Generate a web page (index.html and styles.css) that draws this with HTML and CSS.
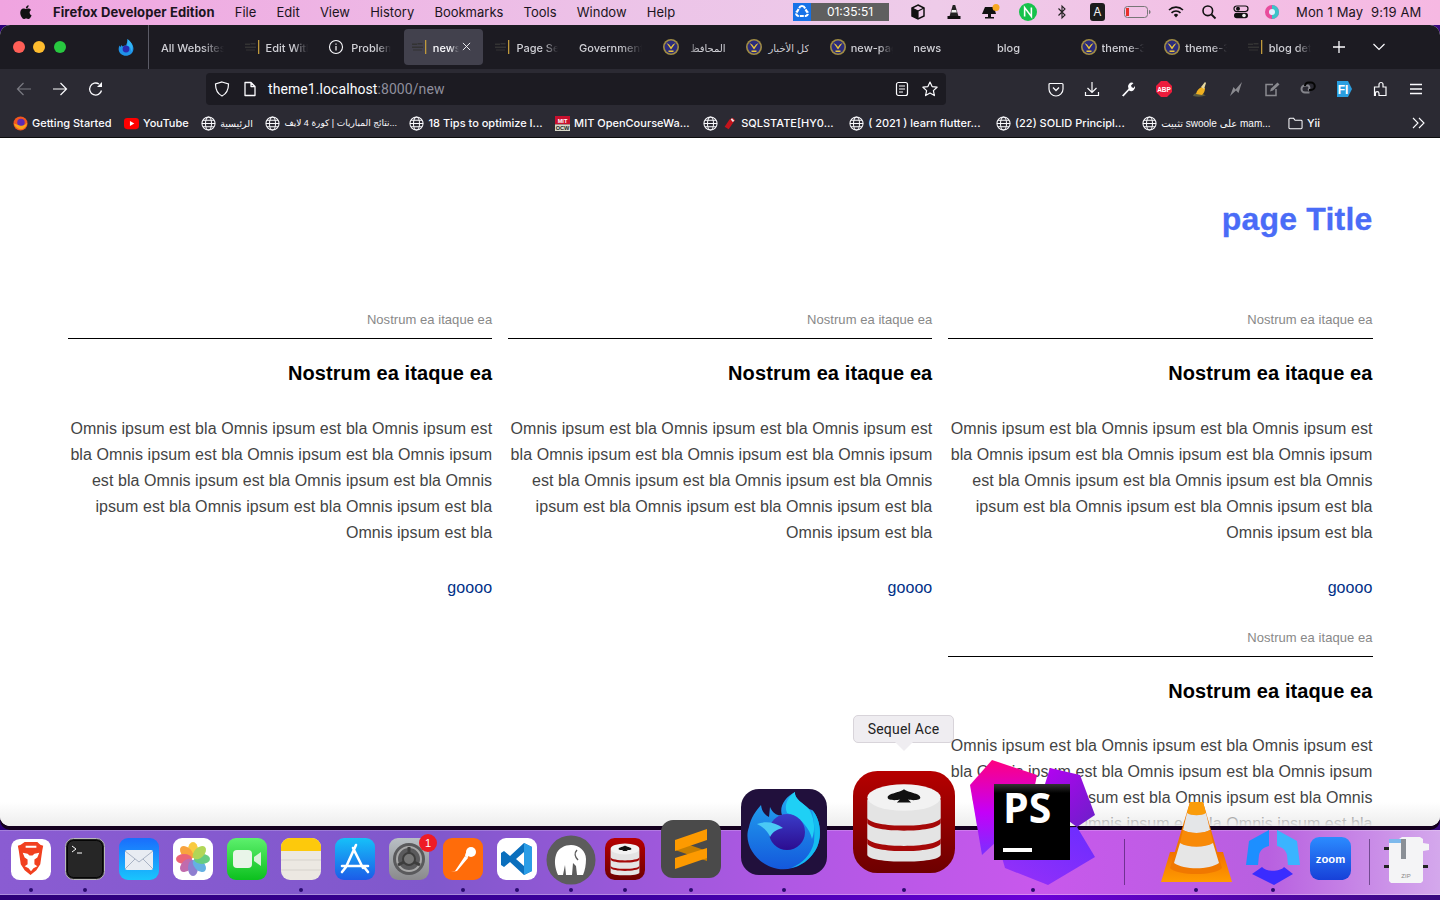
FILE: index.html
```html
<!DOCTYPE html>
<html lang="en">
<head>
    <meta charset="UTF-8">
    <meta name="viewport" content="width=device-width, initial-scale=1.0">
    <title>news</title>
    <link rel="stylesheet" href="styles.css">
</head>
<body>
    <svg class="defs" width="0" height="0">
        <symbol id="globe" viewBox="0 0 16 16"><g fill="none" stroke="#fbfbfe" stroke-width="1.100"><circle cx="8" cy="8" r="7"/><ellipse cx="8" cy="8" rx="3.200" ry="7"/><path d="M1 8h14M2 4.600h12M2 11.400h12"/></g></symbol>
        <symbol id="police" viewBox="0 0 16 16"><circle cx="8" cy="8" r="8" fill="#a08c44"/><circle cx="8" cy="8" r="6.400" fill="#2b2c7c"/><path d="M3.500 4 8 10.500 12.500 4l-2.600 1.500L8 8 6.100 5.500z" fill="#e8c53a"/><path d="M5.500 11.500h5v1.500h-5z" fill="#e8c53a"/></symbol>
        <symbol id="darkfav" viewBox="0 0 16 16"><path d="M0 4.500h5V6H0zM5.500 4h5v1.500h-5zM0 7.500h11V9H0zM1 10.500h9v1H1z" fill="#333"/><path d="M13 1h1.300v14H13z" fill="#c09a3c"/></symbol>
        <symbol id="sequel" viewBox="0 0 100 100" preserveAspectRatio="none"><rect width="100" height="100" rx="24" fill="url(#sq)"/><path d="M14 28v54c0 9 72 9 72 0V28z" fill="#e4e4e4"/><ellipse cx="50" cy="26" rx="36" ry="13" fill="#f2f2f2"/><path d="M14 46c4 10 68 10 72 0v5c-4 10-68 10-72 0zM14 66c4 10 68 10 72 0v5c-4 10-68 10-72 0z" fill="#a50808"/><path d="M50 18c3 3 16 4 16 8 0 3-8 3-12 2l3 3H43l3-3c-4 1-12 1-12-2 0-4 13-5 16-8z" fill="#111"/></symbol>
        <defs>
            <linearGradient id="sq" x1="0" y1="0" x2="0" y2="1"><stop offset="0" stop-color="#b60000"/><stop offset="1" stop-color="#6d0000"/></linearGradient>
            <linearGradient id="ffbowl" x1="0" y1="0" x2="0" y2="1"><stop offset="0" stop-color="#22a8f0"/><stop offset="1" stop-color="#1458dc"/></linearGradient>
            <linearGradient id="ffglobe" x1="0" y1="0" x2="0" y2="1"><stop offset="0" stop-color="#3a3cc8"/><stop offset="1" stop-color="#2c0c90"/></linearGradient>
            <linearGradient id="pspink" x1="0.300" y1="0" x2="0.300" y2="1"><stop offset="0" stop-color="#ff0080"/><stop offset=".55" stop-color="#c400f8"/><stop offset="1" stop-color="#7a30ff"/></linearGradient>
            <linearGradient id="pstop" x1="0" y1="0" x2="1" y2="1"><stop offset="0" stop-color="#b800f4"/><stop offset="1" stop-color="#6a20c8"/></linearGradient>
            <linearGradient id="psbot" x1="0" y1="1" x2="1" y2="0"><stop offset="0" stop-color="#9a30f8"/><stop offset="1" stop-color="#6a2cff"/></linearGradient>
            <linearGradient id="psbox" x1="0" y1="0" x2="0" y2="1"><stop offset="0" stop-color="#333"/><stop offset=".12" stop-color="#000"/></linearGradient>
            <linearGradient id="vlcbase" x1="0" y1="0" x2="0" y2="1"><stop offset="0" stop-color="#f27000"/><stop offset="1" stop-color="#ff9c00"/></linearGradient>
        </defs>
    </svg>

    <header class="menubar">
        <svg class="apple" viewBox="0 0 14 16"><path d="M10.600 8.500c0-1.700 1.400-2.500 1.500-2.600-.8-1.200-2.100-1.300-2.500-1.400-1.100-.1-2.100.6-2.600.6s-1.400-.6-2.300-.6C3.500 4.500 2.400 5.200 1.800 6.200.6 8.400 1.500 11.600 2.700 13.300c.6.800 1.300 1.800 2.200 1.700.9 0 1.200-.6 2.300-.6s1.400.6 2.300.6 1.600-.8 2.100-1.700c.7-1 1-1.900 1-2-.1 0-2-.8-2-2.800zM8.900 3.400c.5-.6.800-1.400.7-2.200-.7 0-1.500.5-2 1.100-.4.500-.8 1.300-.7 2.100.8 0 1.500-.4 2-1z"/></svg>
        <nav class="menu">
            <strong class="menu-app">Firefox Developer Edition</strong>
            <span>File</span><span>Edit</span><span>View</span><span>History</span><span>Bookmarks</span><span>Tools</span><span>Window</span><span>Help</span>
        </nav>
        <div class="status">
            <div class="timer">
                <span class="timer-icon"><svg viewBox="0 0 18 18" width="18" height="18"><path d="M9 3a3 3 0 0 1 2.800 2l2 3.500a2.500 2.500 0 0 1-1 4.500H5.200a2.500 2.500 0 0 1-1-4.500L6.200 5A3 3 0 0 1 9 3z" fill="none" stroke="#fff" stroke-width="2.200" stroke-dasharray="4 1"/></svg></span>
                <span class="timer-time">01:35:51</span>
            </div>
            <svg class="st gap20" viewBox="0 0 16 16"><path d="M8 1l6 3v8l-6 3-6-3V4z" fill="none" stroke="#111" stroke-width="1.500"/><path d="M2 4l6 3 6-3M8 7v8" fill="none" stroke="#111" stroke-width="1.200"/><path d="M2 4l6 3v8l-6-3z" fill="#111"/></svg>
            <svg class="st gap19" viewBox="0 0 16 16"><path d="M6.800 1h2.400l3.200 11H3.600z" fill="#222"/><path d="M5.800 6h4.400l.6 2.500H5.200z" fill="#eee"/><path d="M1.500 12h13v3h-13z" fill="#111"/></svg>
            <svg class="st st-bell gap18" viewBox="0 0 20 16"><path d="M1 10 4 3h9l2 7z" fill="#111"/><path d="M7 10h3v3h3v1.500H4V13h3z" fill="#111"/><circle cx="15" cy="3.500" r="3.500" fill="#f7a823"/></svg>
            <svg class="st st-n gap17" viewBox="0 0 16 16"><circle cx="8" cy="8" r="8" fill="#16c24b"/><path d="M5 12V4l6 8V4" fill="none" stroke="#fff" stroke-width="1.400"/></svg>
            <svg class="st gap20" viewBox="0 0 16 16"><path d="M4.500 4.500 11 11l-3 3V2l3 3-6.500 6.500" fill="none" stroke="#222" stroke-width="1.100"/></svg>
            <span class="st-a gap19">A</span>
            <svg class="st-batt gap17" viewBox="0 0 27 12"><rect x=".5" y=".5" width="23" height="11" rx="3" fill="none" stroke="#777"/><rect x="2" y="2" width="3" height="8" fill="#e8302a"/><path d="M25 4c1 .3 1.500 1 1.500 2s-.5 1.700-1.500 2z" fill="#777"/></svg>
            <svg class="st gap17" viewBox="0 0 16 16"><g fill="none" stroke="#111" stroke-width="1.600"><path d="M1 6a10 10 0 0 1 14 0"/><path d="M3.500 8.800a6.500 6.500 0 0 1 9 0"/></g><path d="M5.800 11a3 3 0 0 1 4.400 0L8 13.500z" fill="#111"/></svg>
            <svg class="st gap16" viewBox="0 0 16 16"><circle cx="6.800" cy="6.800" r="4.800" fill="none" stroke="#111" stroke-width="1.600"/><path d="M10.500 10.500 14.500 14.500" stroke="#111" stroke-width="1.800"/></svg>
            <svg class="st gap15" viewBox="0 0 16 16"><rect x="1" y="2" width="14" height="5.500" rx="2.700" fill="none" stroke="#111" stroke-width="1.200"/><circle cx="5" cy="4.700" r="2" fill="#111"/><rect x="1" y="8.800" width="14" height="5.500" rx="2.700" fill="#111"/><circle cx="11" cy="11.500" r="1.800" fill="#eee"/></svg>
            <svg class="st gap15" viewBox="0 0 16 16"><circle cx="8" cy="8" r="7" fill="#e84b9c"/><path d="M8 1a7 7 0 0 1 0 14z" fill="#3cc4c9"/><circle cx="8" cy="8" r="3" fill="#e6f0ff"/></svg>
            <span class="clock">Mon 1 May&nbsp;&nbsp;9:19 AM</span>
        </div>
    </header>

    <section class="window">
        <div class="tabbar">
            <div class="lights"><i class="red"></i><i class="yellow"></i><i class="green"></i></div>
            <div class="ff-tab">
                <svg width="16" height="17" viewBox="0 0 16 17"><path d="M9.500 0c1 2 3 2.500 4.500 5 2.500 4 1.500 8-1 10-3 2.500-7.500 2.300-10 0C.5 13.200 0 9.500 1.500 6.500l1 1.500 1-2 1 1.500c1-.8 2.500-1 3.500-1 .8-1.800 1.500-4 1.500-6.500z" fill="#1f92e8"/><circle cx="8" cy="10" r="3.400" fill="#2a2ab0"/><path d="M9.500 0c3 2 5 5 5 8 0 2-.7 3.500-1.500 5 .5-3-.5-5.500-4-6.500.6-2 .8-4.500.5-6.500z" fill="#31b4f5"/></svg>
            </div>
            <div class="tabs">
                <div class="tab"><span class="tab-text">All Websites</span></div>
                <div class="tab"><svg class="fav"><use href="#darkfav"/></svg><span class="tab-text">Edit With</span></div>
                <div class="tab tab-prob"><svg class="fav" viewBox="0 0 16 16"><circle cx="8" cy="8" r="6.500" fill="none" stroke="#fbfbfe" stroke-width="1.100"/><path d="M8 7v4.500M8 4.500v1.300" stroke="#fbfbfe" stroke-width="1.200"/></svg><span class="tab-text">Problem</span></div>
                <div class="tab active"><svg class="fav"><use href="#darkfav"/></svg><span class="tab-text">news</span><svg class="tab-close" viewBox="0 0 10 10"><path d="M1 1l8 8M9 1 1 9" stroke="#fbfbfe" stroke-width="1"/></svg></div>
                <div class="tab"><svg class="fav"><use href="#darkfav"/></svg><span class="tab-text">Page Sec</span></div>
                <div class="tab"><span class="tab-text">Government</span></div>
                <div class="tab"><svg class="fav"><use href="#police"/></svg><span class="tab-text tab-rtl ar" dir="rtl">المحافظ</span></div>
                <div class="tab"><svg class="fav"><use href="#police"/></svg><span class="tab-text tab-full ar" dir="rtl">كل الأخبار</span></div>
                <div class="tab"><svg class="fav"><use href="#police"/></svg><span class="tab-text">new-page</span></div>
                <div class="tab"><span class="tab-text">news</span></div>
                <div class="tab"><span class="tab-text">blog</span></div>
                <div class="tab"><svg class="fav"><use href="#police"/></svg><span class="tab-text">theme-3</span></div>
                <div class="tab"><svg class="fav"><use href="#police"/></svg><span class="tab-text">theme-3</span></div>
                <div class="tab tab-last"><svg class="fav"><use href="#darkfav"/></svg><span class="tab-text">blog det</span></div>
            </div>
            <svg class="tab-plus" viewBox="0 0 12 12"><path d="M6 0v12M0 6h12" stroke="#fbfbfe" stroke-width="1.300"/></svg>
            <svg class="tab-list" viewBox="0 0 12 8"><path d="M.5 1 6 6.500 11.500 1" fill="none" stroke="#fbfbfe" stroke-width="1.200"/></svg>
        </div>

        <div class="toolbar">
            <svg class="tb dim" viewBox="0 0 16 16"><path d="M15 8H1.500M7.500 2 1.500 8l6 6" fill="none" stroke="currentColor" stroke-width="1.200"/></svg>
            <svg class="tb" viewBox="0 0 16 16"><path d="M1 8h13.500M8.500 2l6 6-6 6" fill="none" stroke="currentColor" stroke-width="1.200"/></svg>
            <svg class="tb" viewBox="0 0 16 16"><path d="M13.500 9.500A6 6 0 1 1 11 3" fill="none" stroke="currentColor" stroke-width="1.300"/><path d="M14 1v5H9z" fill="currentColor"/></svg>
            <div class="urlbar">
                <svg class="tb" viewBox="0 0 16 16"><path d="M8 1 14.500 3c0 6-1.500 9.500-6.500 12C3 12.500 1.500 9 1.500 3z" fill="none" stroke="currentColor" stroke-width="1.200"/></svg>
                <svg class="tb" viewBox="0 0 16 16"><path d="M3 1.500h6l4 4v9H3zM9 1.500v4h4" fill="none" stroke="currentColor" stroke-width="1.300" stroke-linejoin="round"/></svg>
                <span class="url"><b>theme1.localhost</b>:8000/new</span>
                <svg class="tb" viewBox="0 0 16 16"><rect x="2.500" y="1.500" width="11" height="13" rx="2" fill="none" stroke="currentColor" stroke-width="1.200"/><path d="M5 5h6M5 8h6M5 11h4" stroke="currentColor" stroke-width="1.200"/></svg>
                <svg class="tb" viewBox="0 0 16 16"><path d="m8 1 2.100 4.600 5 .6-3.700 3.400 1 5L8 12.100 3.600 14.600l1-5L.9 6.200l5-.6z" fill="none" stroke="currentColor" stroke-width="1.200" stroke-linejoin="round"/></svg>
            </div>
            <div class="tools">
                <svg class="tb" viewBox="0 0 16 16"><path d="M2 2.500h12a1 1 0 0 1 1 1V8a7 7 0 0 1-14 0V3.500a1 1 0 0 1 1-1z" fill="none" stroke="currentColor" stroke-width="1.200"/><path d="m5 6.500 3 3 3-3" fill="none" stroke="currentColor" stroke-width="1.300"/></svg>
                <svg class="tb" viewBox="0 0 16 16"><path d="M8 1v10M3.500 7 8 11.500 12.500 7M1.500 11v3.500h13V11" fill="none" stroke="currentColor" stroke-width="1.200"/></svg>
                <svg class="tb" viewBox="0 0 16 16"><path d="M2 14.500l6.500-6.800a4 4 0 0 1 5-5.700L11 4.500l.7 1.800 1.800.7L15 5a4 4 0 0 1-6 4.500L3.500 15.500z" fill="currentColor"/></svg>
                <svg class="tb" viewBox="0 0 16 16"><path d="M5 0h6l5 5v6l-5 5H5l-5-5V5z" fill="#ec1c3c"/><text x="8" y="10.500" class="abp">ABP</text></svg>
                <svg class="tb" viewBox="0 0 16 16"><path d="M1 15c.5-2 2-3 4-3l6 .5c1 1 1.500 1.500 3 1.500-3 2-9 2-13 1z" fill="#5a5a40"/><path d="M4 13c1-4 3-6 6-7l3 1c0 3-1 5-3 7z" fill="#f0b020"/><path d="M9 6l4-5 1 1-2 6z" fill="#e8d9a0"/></svg>
                <svg class="tb" viewBox="0 0 16 16"><path d="M2 15 5.500 6l2 2.500L14 1l-3.500 11-2.500-2.500z" fill="#8a8a90"/></svg>
                <svg class="tb" viewBox="0 0 16 16"><path d="M12 8v6.500H2v-11h7" fill="none" stroke="#8a8a90" stroke-width="1.500"/><path d="M6 10.500l1-3 6.500-6 2 2-6.500 6z" fill="#8a8a90"/></svg>
                <svg class="tb" viewBox="0 0 16 16"><path d="M9.500 11.500H5a3.500 3.500 0 0 1 0-7h3a2.500 2.500 0 0 1 0 4.500" fill="none" stroke="#85858c" stroke-width="2"/><path d="M5 5a3.500 3.500 0 0 1 3.500-3.500h2.500a3.500 3.500 0 0 1 0 7.500H9" fill="none" stroke="#050505" stroke-width="2"/></svg>
                <svg class="tb" viewBox="0 0 16 16"><path d="M1 0h11l4 8-4 8H1z" fill="#2a9ee0"/><text x="7" y="12.500" class="fi">FI</text></svg>
                <svg class="tb" viewBox="0 0 16 16"><path d="M2.500 6H7V3.500a2 2 0 0 1 4 0V6h3v8.500H7v-2a1.800 1.800 0 0 0-3.600 0v2H2.500z" fill="none" stroke="currentColor" stroke-width="1.200"/></svg>
                <svg class="tb" viewBox="0 0 16 16"><path d="M2 3.500h12M2 8h12M2 12.500h12" stroke="currentColor" stroke-width="1.300"/></svg>
            </div>
        </div>

        <div class="bookmarks">
            <span class="bm"><svg class="bm-icon" viewBox="0 0 16 16"><circle cx="8" cy="8" r="7.500" fill="#f2571f"/><circle cx="8.500" cy="7" r="4" fill="#5b2bb5"/><path d="M1 8c1 4 5 7 9 6 3-1 5-4 5-7-2 3-5 4-8 3-2-.5-4-1-6-2z" fill="#f9a31a"/></svg>Getting Started</span>
            <span class="bm"><svg class="bm-icon" viewBox="0 0 16 16"><rect y="2" width="16" height="12" rx="3.500" fill="#f00"/><path d="M6.300 5.300v5.400L11 8z" fill="#fff"/></svg>YouTube</span>
            <span class="bm"><svg class="bm-icon"><use href="#globe"/></svg><span class="ar ar-short">الرئيسية</span></span>
            <span class="bm"><svg class="bm-icon"><use href="#globe"/></svg><span class="ar ar-small">نتائج المباريات | كورة 4 لايف...</span></span>
            <span class="bm"><svg class="bm-icon"><use href="#globe"/></svg>18 Tips to optimize I...</span>
            <span class="bm"><svg class="bm-icon" viewBox="0 0 16 16"><rect width="16" height="9" fill="#c8102e"/><rect y="9" width="16" height="7" fill="#d8d8c8"/><text x="8" y="7.400" class="mit">MIT</text><text x="8" y="15" class="ocw">OCW</text></svg>MIT OpenCourseWa...</span>
            <span class="bm bm-sql"><svg class="bm-icon"><use href="#globe"/></svg><svg class="bm-icon bm-gem" viewBox="0 0 16 16"><path d="M7 15 2 12l6-9 4-2 3 3-2 2z" fill="#c4141c"/><path d="M11 1.500l3 3-2 1.500-2.500-3z" fill="#e8e8e8"/></svg>SQLSTATE[HY0...</span>
            <span class="bm push3"><svg class="bm-icon"><use href="#globe"/></svg>( 2021 ) learn flutter...</span>
            <span class="bm push3"><svg class="bm-icon"><use href="#globe"/></svg>(22) SOLID Principl...</span>
            <span class="bm push5"><svg class="bm-icon"><use href="#globe"/></svg><span class="ar">تثبيت swoole على mam...</span></span>
            <span class="bm push5"><svg class="bm-icon" viewBox="0 0 16 16"><path d="M1 3.500a1 1 0 0 1 1-1h4l1.500 2H14a1 1 0 0 1 1 1v7a1 1 0 0 1-1 1H2a1 1 0 0 1-1-1z" fill="none" stroke="#fbfbfe" stroke-width="1.100"/></svg>Yii</span>
            <svg class="bm-more" viewBox="0 0 14 12"><path d="m1 1 5 5-5 5M7 1l5 5-5 5" fill="none" stroke="#fbfbfe" stroke-width="1.100"/></svg>
        </div>

        <main class="page" dir="rtl">
            <h1 class="page-title">page Title</h1>
            <div class="cards">
                <article class="card">
                    <div class="card-meta">Nostrum ea itaque ea</div>
                    <h2 class="card-title">Nostrum ea itaque ea</h2>
                    <p class="card-text">Omnis ipsum est bla Omnis ipsum est bla Omnis ipsum est bla Omnis ipsum est bla Omnis ipsum est bla Omnis ipsum est bla Omnis ipsum est bla Omnis ipsum est bla Omnis ipsum est bla Omnis ipsum est bla Omnis ipsum est bla Omnis ipsum est bla</p>
                    <a class="card-link" href="#">goooo</a>
                </article>
                <article class="card">
                    <div class="card-meta">Nostrum ea itaque ea</div>
                    <h2 class="card-title">Nostrum ea itaque ea</h2>
                    <p class="card-text">Omnis ipsum est bla Omnis ipsum est bla Omnis ipsum est bla Omnis ipsum est bla Omnis ipsum est bla Omnis ipsum est bla Omnis ipsum est bla Omnis ipsum est bla Omnis ipsum est bla Omnis ipsum est bla Omnis ipsum est bla Omnis ipsum est bla</p>
                    <a class="card-link" href="#">goooo</a>
                </article>
                <article class="card">
                    <div class="card-meta">Nostrum ea itaque ea</div>
                    <h2 class="card-title">Nostrum ea itaque ea</h2>
                    <p class="card-text">Omnis ipsum est bla Omnis ipsum est bla Omnis ipsum est bla Omnis ipsum est bla Omnis ipsum est bla Omnis ipsum est bla Omnis ipsum est bla Omnis ipsum est bla Omnis ipsum est bla Omnis ipsum est bla Omnis ipsum est bla Omnis ipsum est bla</p>
                    <a class="card-link" href="#">goooo</a>
                </article>
                <article class="card">
                    <div class="card-meta">Nostrum ea itaque ea</div>
                    <h2 class="card-title">Nostrum ea itaque ea</h2>
                    <p class="card-text">Omnis ipsum est bla Omnis ipsum est bla Omnis ipsum est bla Omnis ipsum est bla Omnis ipsum est bla Omnis ipsum est bla Omnis ipsum est bla Omnis ipsum est bla Omnis ipsum est bla Omnis ipsum est bla Omnis ipsum est bla Omnis ipsum est bla</p>
                    <a class="card-link" href="#">goooo</a>
                </article>
            </div>
        </main>
    </section>

    <footer class="dock">
        <div class="dock-item running"><svg viewBox="0 0 41 42" class="di"><rect width="41" height="42" rx="9" fill="#fff"/><path d="M14 3h13l3 3 3 1-1 5-2 14-4 6-6 5-6-5-4-6-2-14-1-5 3-1z" fill="#f1401f"/><path d="M12 14l5 1 2 2h3l2-2 5-1-2 5-3 2v5l3 2-4 2-2.500 3-2.500-3-4-2 3-2v-5l-3-2zM15 7h11v2H15z" fill="#fff"/></svg></div>
        <div class="dock-item running"><svg viewBox="0 0 40 42" class="di"><rect x=".5" y=".5" width="39" height="41" rx="8" fill="#222" stroke="#b8b8b8"/><rect x="2.500" y="2.500" width="35" height="37" rx="6" fill="#262626" stroke="#050505"/><path d="M7 8l4 3-4 3" fill="none" stroke="#fff"/><path d="M12 15h5" stroke="#fff"/></svg></div>
        <div class="dock-item"><svg viewBox="0 0 40 42" class="di"><defs><linearGradient id="mail" x1="0" y1="0" x2="0" y2="1"><stop offset="0" stop-color="#1a6dfc"/><stop offset="1" stop-color="#19c5fd"/></linearGradient></defs><rect width="40" height="42" rx="9" fill="url(#mail)"/><rect x="6" y="12" width="28" height="20" rx="2" fill="#e8ecf2"/><path d="M6 13l14 11 14-11M6 31l10-10M34 31 24 21" fill="none" stroke="#a9b3c4"/></svg></div>
        <div class="dock-item"><svg viewBox="0 0 40 42" class="di"><rect width="40" height="42" rx="9" fill="#fff"/><g transform="translate(20 21)" opacity=".85"><ellipse cy="-9" rx="5" ry="8" fill="#f9c31f"/><ellipse cy="-9" rx="5" ry="8" fill="#f7941e" transform="rotate(-45)"/><ellipse cy="-9" rx="5" ry="8" fill="#e84a5f" transform="rotate(-90)"/><ellipse cy="-9" rx="5" ry="8" fill="#b7529f" transform="rotate(-135)"/><ellipse cy="-9" rx="5" ry="8" fill="#7b68c8" transform="rotate(180)"/><ellipse cy="-9" rx="5" ry="8" fill="#4aa3df" transform="rotate(135)"/><ellipse cy="-9" rx="5" ry="8" fill="#4cc46c" transform="rotate(90)"/><ellipse cy="-9" rx="5" ry="8" fill="#a4cf3a" transform="rotate(45)"/></g></svg></div>
        <div class="dock-item"><svg viewBox="0 0 40 42" class="di"><defs><linearGradient id="ft" x1="0" y1="0" x2="0" y2="1"><stop offset="0" stop-color="#5df06d"/><stop offset="1" stop-color="#0cc01e"/></linearGradient></defs><rect width="40" height="42" rx="9" fill="url(#ft)"/><rect x="6" y="12" width="19" height="18" rx="4" fill="#e9f5e9"/><path d="M27 19l7-5v14l-7-5z" fill="#d8f2d8"/></svg></div>
        <div class="dock-item running"><svg viewBox="0 0 40 42" class="di"><rect width="40" height="42" rx="9" fill="#ece8e2"/><path d="M0 13V9a9 9 0 0 1 9-9h22a9 9 0 0 1 9 9v4z" fill="#fdc90c"/><path d="M0 22h40M0 32h40" stroke="#d6d2cc"/></svg></div>
        <div class="dock-item"><svg viewBox="0 0 40 42" class="di"><defs><linearGradient id="as" x1="0" y1="0" x2="0" y2="1"><stop offset="0" stop-color="#16c0f8"/><stop offset="1" stop-color="#1c5ce8"/></linearGradient></defs><rect width="40" height="42" rx="9" fill="url(#as)"/><path d="M21 7 11 29M18 10l10 20M7 28h26M7 34l4-5M33 34l-4-5" fill="none" stroke="#fff" stroke-width="2.600" stroke-linecap="round"/></svg></div>
        <div class="dock-item"><svg viewBox="0 0 40 42" class="di"><defs><linearGradient id="sp" x1="0" y1="0" x2="0" y2="1"><stop offset="0" stop-color="#b9bfc4"/><stop offset="1" stop-color="#8a8a8c"/></linearGradient></defs><rect width="40" height="42" rx="9" fill="url(#sp)"/><circle cx="20" cy="21" r="16" fill="#5a5a5c"/><circle cx="20" cy="21" r="12" fill="none" stroke="#a8a8a8" stroke-width="2"/><circle cx="20" cy="21" r="6" fill="#777" stroke="#3d3d3d" stroke-width="2"/><path d="M20 15V9M15 24l-6 3M25 24l6 3" stroke="#3d3d3d" stroke-width="3"/></svg><span class="badge">1</span></div>
        <div class="dock-item running"><svg viewBox="0 0 40 42" class="di"><rect width="40" height="42" rx="9" fill="#ff6c0a"/><path d="M8 34l4-1 10-15 3 2-11 13z" fill="#fff"/><circle cx="28" cy="14" r="5" fill="#fff"/><path d="M22 18c0-3 2-5 4-6l-1 8z" fill="#fff"/></svg></div>
        <div class="dock-item running"><svg viewBox="0 0 40 42" class="di"><rect width="40" height="42" rx="9" fill="#fff"/><path d="M27 5l8 4v24l-8 4-14-13-6 5-3-2v-12l3-2 6 5zM27 14l-8 7 8 7z" fill="#0a6fbd" fill-rule="evenodd"/><path d="M27 5l8 4v24l-8 4z" fill="#2a9de6"/></svg></div>
        <div class="dock-item running item-mamp"><svg viewBox="0 0 50 50" class="di"><circle cx="25" cy="25" r="24.500" fill="#5c5c5c"/><path d="M12 40c-3-7-4-14-2-20 2-7 9-10 15-10 8 0 15 6 15 14 0 6-1 11-3 16h-6l-1-9-3-3-1 12h-6l-1-10-2 10z" fill="#fff"/><path d="M31 15c-3 3-2 7 1 10" fill="none" stroke="#5c5c5c" stroke-width="1.500"/></svg></div>
        <div class="dock-item running"><svg viewBox="0 0 40 42" class="di"><use href="#sequel" width="40" height="42"/></svg></div>
        <div class="dock-item running item-sublime"><svg viewBox="0 0 60 58" class="di"><rect width="60" height="58" rx="12" fill="#4a4a4a"/><path d="M14 20l32 11v10L14 30z" fill="#c87f00"/><path d="M46 9 14 20v11l32-11z" fill="#fd9a00"/><path d="M46 28v10L14 49V38z" fill="#fd9a00"/></svg></div>
        <div class="dock-item running item-firefox"><svg viewBox="0 0 86 86" class="di"><rect width="86" height="86" rx="18" fill="#21103c"/><path d="M20 16c1 7 4 10 8 12l1-10c3 7 8 9 12 8-3-8 3-18 13-23-1 7 8 11 14 17l3 1c9 9 11 29 3 41-10 16-28 22-44 16C14 72 2 54 8 38c2-10 7-16 12-22z" fill="url(#ffbowl)"/><path d="M54 3c-1 7 8 11 14 17 5 8 7 20 3 30-2-10-11-22-25-26-3-8 0-15 8-21z" fill="#1fd0f5"/><path d="M71 21c9 9 11 29 3 41-6 9-14 15-24 17 12-5 20-13 23-26 1-11 0-22-2-32z" fill="#14bcf0"/><circle cx="46" cy="43" r="18" fill="url(#ffglobe)"/><path d="M16 35c8-3 18-2 26 4-5 1-10 3-13 9-2-6-7-10-13-13z" fill="#4ac9f5"/></svg></div>
        <div class="dock-item running item-sequel"><svg viewBox="0 0 100 100" class="di"><use href="#sequel" width="100" height="100"/></svg><div class="tooltip">Sequel Ace</div></div>
        <div class="dock-item running item-ps"><svg viewBox="0 0 125 125" class="di"><path d="M22 0 67 15 60 50 12 95 0 25z" fill="url(#pspink)"/><path d="M80 8 110 15 125 55 107 67 70 40z" fill="url(#pstop)"/><path d="M107 67 125 97 78 125 35 108 24 70z" fill="url(#psbot)"/><rect x="24" y="24" width="76" height="76" fill="url(#psbox)"/><text x="33" y="63" class="ps">PS</text><rect x="33" y="88" width="29" height="4" fill="#fff"/></svg></div>
        <i class="dock-sep sep-a"></i>
        <div class="dock-item running item-vlc"><svg viewBox="0 0 72 82" class="di"><path d="M1 82 10 52h53l9 30z" fill="url(#vlcbase)"/><path d="M30 2h13l19 66c-8 8-44 8-52 0z" fill="#f07800"/><path d="M30 2h13l3 11c-4 3-15 3-19 0z" fill="#fa9c0a"/><path d="M27 13c4 3 15 3 19 0l4 17c-6 4-21 4-27 0z" fill="#e4e6e8"/><path d="M23 30c6 4 21 4 27 0l3 13c-8 5-25 5-33 0z" fill="#f88a08"/><path d="M20 43c8 5 25 5 33 0l6 20c-10 7-35 7-45 0z" fill="#e6e6e6"/></svg></div>
        <div class="dock-item running item-wheel"><svg viewBox="0 0 56 56" class="di"><path d="M24 1 4 12l-3 24h12l1-10c1-5 5-8 10-9z" fill="#1d8fff"/><path d="M32 1l20 11 3 24H43l-1-10c-1-5-5-8-10-9z" fill="#3ab4ff"/><path d="M17 38c4 5 18 5 22 0l9 7-19 11L7 45z" fill="#3a2cff"/></svg></div>
        <div class="dock-item item-zoom"><svg viewBox="0 0 40 42" class="di"><defs><linearGradient id="zm" x1="0" y1="0" x2="0" y2="1"><stop offset="0" stop-color="#2b8cff"/><stop offset="1" stop-color="#1740d8"/></linearGradient></defs><rect width="40" height="42" rx="9" fill="url(#zm)"/><text x="20" y="25" class="zoom">zoom</text></svg></div>
        <i class="dock-sep sep-b"></i>
        <div class="dock-item item-zip"><svg viewBox="0 0 46 46" class="di"><path d="M6 2h10l3-2h18l3 2v4l6 1v6l-6 1v30l-2 2H8l-2-2z" fill="#f4f4f6"/><path d="M6 2h14v4H6z" fill="#4aa0e8" opacity=".7"/><path d="M18 2h5v20h-5z" fill="#8a8f96"/><path d="M1 10h5v3H1zM1 28h5v3H1zM40 28h5v3h-5z" fill="#222"/><text x="23" y="41" class="zip">ZIP</text></svg></div>
    </footer>
</body>
</html>
```

FILE: styles.css
```css
* {
    box-sizing: border-box;
}
html,
body {
    margin: 0;
    height: 900px;
    overflow: hidden;
}
body {
    width: 1440px;
    font-family: "Liberation Sans", Arial, sans-serif;
    background: linear-gradient(90deg, #2c0078 0%, #3c00a0 45%, #6a00d8 72%, #3a0a80 100%);
    display: flex;
    flex-direction: column;
}
.defs {
    position: absolute;
}
.ar {
    font-family: "Liberation Sans", "DejaVu Sans", sans-serif;
    font-size: 10px;
}
.ar-small {
    font-size: 9px;
}
.ar-short {
    font-size: 9.500px;
}

/* mac menu bar */
.menubar {
    height: 25px;
    flex: none;
    display: flex;
    align-items: center;
    padding: 0 19px 2px;
    color: #1b1420;
    font-size: 13px;
    background: linear-gradient(90deg, #f0a4e0 0%, #ecc4e8 45%, #eecbe9 65%, #f6b8e2 100%);
    font-family: Inter, "Liberation Sans", sans-serif;
}
.apple {
    width: 14px;
    height: 16px;
    flex: none;
    fill: #111;
}
.menu {
    display: flex;
    margin-left: 20px;
    gap: 20.200px;
}
.menu-app {
    font-weight: 700;
    letter-spacing: 0.1px;
}
.status {
    margin-left: auto;
    width: 628px;
    flex: none;
    display: flex;
    align-items: center;
}
.timer {
    display: flex;
    width: 96px;
    height: 18px;
    background: #5f5f5f;
    color: #fff;
    font-size: 12px;
    margin-right: 21px;
}
.timer-icon {
    width: 18px;
    height: 18px;
    background: #1672e8;
}
.timer-time {
    width: 78px;
    text-align: center;
    line-height: 18px;
}
.st {
    width: 16px;
    height: 16px;
    flex: none;
}
.st-bell {
    width: 20px;
}
.st-n {
    width: 18px;
    height: 18px;
}
.st-a {
    width: 15px;
    height: 18px;
    flex: none;
    border-radius: 3px;
    background: #1c1c1c;
    color: #eee;
    font-size: 12px;
    line-height: 18px;
    text-align: center;
}
.st-batt {
    width: 27px;
    height: 12px;
    flex: none;
}
.gap20 {
    margin-right: 20px;
}
.gap19 {
    margin-right: 19px;
}
.gap18 {
    margin-right: 18px;
}
.gap17 {
    margin-right: 17px;
}
.gap16 {
    margin-right: 16px;
}
.gap15 {
    margin-right: 15px;
}
.clock {
    margin-left: 1px;
    letter-spacing: 0.15px;
    white-space: nowrap;
}

/* browser window */
.window {
    height: 801px;
    flex: none;
    display: flex;
    flex-direction: column;
    overflow: hidden;
    border-radius: 10px;
    background: #fff;
    color: #fbfbfe;
    box-shadow: 0 4px 0 #14001f;
}
.tabbar {
    height: 44px;
    flex: none;
    display: flex;
    align-items: center;
    background: #1c1b22;
}
.lights {
    flex: none;
    display: flex;
    gap: 8.500px;
    margin-left: 12.500px;
    width: 105.500px;
}
.lights i {
    width: 12px;
    height: 12px;
    border-radius: 50%;
}
.red {
    background: #ff5f57;
}
.yellow {
    background: #febc2e;
}
.green {
    background: #28c840;
}
.ff-tab {
    flex: none;
    width: 31px;
    height: 44px;
    display: flex;
    align-items: center;
    border-right: 1px solid #5b5b66;
}
.tabs {
    flex: none;
    display: flex;
    gap: 4.600px;
    margin-left: 4px;
}
.tab {
    width: 79px;
    height: 36px;
    flex: none;
    padding: 0 8px;
    display: flex;
    align-items: center;
    gap: 5px;
    border-radius: 4px;
    overflow: hidden;
    position: relative;
    font-size: 11px;
    font-family: Inter, "Liberation Sans", "DejaVu Sans", sans-serif;
    font-weight: 500;
    color: #d0d0d6;
    white-space: nowrap;
}
.tab-prob {
    gap: 7px;
}
.tab.active {
    background: #42414d;
    padding-right: 24px;
    color: #fbfbfe;
}
.tab-text {
    flex: 1;
    padding-top: 2px;
    overflow: hidden;
    -webkit-mask-image: linear-gradient(90deg, #000 65%, transparent 100%);
    mask-image: linear-gradient(90deg, #000 65%, transparent 100%);
}
.tab-rtl {
    -webkit-mask-image: linear-gradient(270deg, #000 65%, transparent 100%);
    mask-image: linear-gradient(270deg, #000 65%, transparent 100%);
}
.tab-full {
    -webkit-mask-image: none;
    mask-image: none;
}
.fav {
    width: 16px;
    height: 16px;
    flex: none;
}
.tab-close {
    position: absolute;
    right: 12px;
    top: 13px;
    width: 9px;
    height: 9px;
}
.tab-plus {
    width: 12px;
    height: 12px;
    flex: none;
    margin-left: 14px;
}
.tab-list {
    width: 12px;
    height: 8px;
    flex: none;
    margin-left: 28px;
}
.toolbar {
    height: 38px;
    flex: none;
    display: flex;
    align-items: center;
    padding: 2px 0 0 16px;
    gap: 20px;
    background: #2b2a33;
}
.tb {
    width: 16px;
    height: 16px;
    flex: none;
    color: #fbfbfe;
}
.tb.dim {
    color: #7a7a82;
}
.urlbar {
    width: 740px;
    height: 32px;
    flex: none;
    margin-left: 82px;
    padding: 0 8px;
    display: flex;
    align-items: center;
    gap: 12px;
    border-radius: 4px;
    background: #1c1b22;
}
.url {
    flex: 1;
    margin-left: -2px;
    font-size: 14px;
    letter-spacing: 0.08px;
    color: #8f8f9d;
    font-family: Roboto, "Liberation Sans", sans-serif;
}
.url b {
    font-weight: 400;
    color: #fbfbfe;
}
.tools {
    flex: none;
    display: flex;
    gap: 20px;
    margin-left: 82px;
}
.abp {
    font: 700 6.500px "Liberation Sans", sans-serif;
    fill: #fff;
    text-anchor: middle;
}
.fi {
    font: 700 12px "Liberation Sans", sans-serif;
    fill: #fff;
    text-anchor: middle;
}
.mit,
.ocw {
    font: 700 6px "Liberation Sans", sans-serif;
    text-anchor: middle;
}
.mit {
    fill: #fff;
}
.ocw {
    fill: #222;
}
.bookmarks {
    height: 31px;
    flex: none;
    display: flex;
    align-items: center;
    padding: 2px 0 0 13px;
    gap: 12.500px;
    position: relative;
    background: #2b2a33;
    font-size: 11px;
    font-weight: 500;
    font-family: Inter, "Liberation Sans", "DejaVu Sans", sans-serif;
    white-space: nowrap;
    border-bottom: 1px solid #0c0c0d;
}
.bm {
    flex: none;
    display: flex;
    align-items: center;
    gap: 4px;
}
.bm-sql {
    margin-left: 1px;
    gap: 5px;
}
.push3 {
    margin-left: 3px;
}
.push5 {
    margin-left: 5px;
}
.bm-icon {
    width: 15px;
    height: 15px;
    flex: none;
}
.bm-gem {
    width: 13px;
    height: 13px;
}
.bm-more {
    position: absolute;
    right: 14px;
    top: 10px;
    width: 14px;
    height: 12px;
}

/* page content */
.page {
    flex: 1;
    position: relative;
    overflow: hidden;
    padding: 62px 67.500px 0 68px;
    background: #fff;
    font-family: "Liberation Sans", Arial, sans-serif;
}
.page::after {
    content: "";
    position: absolute;
    left: 0;
    right: 0;
    bottom: 0;
    height: 24px;
    background: linear-gradient(rgba(236, 236, 236, 0), rgba(236, 236, 236, 0.95));
}
.page-title {
    margin: 0;
    font-size: 32px;
    line-height: 38px;
    font-weight: 700;
    letter-spacing: 0.2px;
    color: #4a6cf7;
    -webkit-text-stroke: 0.3px #4a6cf7;
}
.cards {
    display: grid;
    grid-template-columns: repeat(3, 1fr);
    gap: 28.700px 16px;
    margin-top: 71px;
}
.card-meta {
    height: 30px;
    padding-top: 1px;
    line-height: 20px;
    font-size: 13px;
    letter-spacing: 0.05px;
    color: #888;
    border-bottom: 1px solid #000;
}
.card-title {
    margin: 22px 0 0;
    font-size: 20px;
    line-height: 24px;
    font-weight: 700;
    letter-spacing: 0.1px;
    color: #000;
}
.card-text {
    margin: 30.700px 0 0;
    font-size: 16px;
    line-height: 26px;
    letter-spacing: 0.07px;
    color: #444;
}
.card-link {
    display: block;
    margin-top: 32.300px;
    font-size: 16px;
    line-height: 20px;
    letter-spacing: 0.07px;
    color: #003087;
    text-decoration: none;
}

/* dock */
.dock {
    height: 65px;
    margin-top: 4px;
    flex: none;
    position: relative;
    display: flex;
    align-items: flex-end;
    padding-left: 11px;
    gap: 14px;
    background: linear-gradient(90deg, #8a5cd2 0%, #8058cc 30%, #b058e4 55%, #c858ec 72%, #b860e0 88%, #d4a8ec 100%);
    border-top: 1px solid rgba(255, 255, 255, 0.2);
    border-bottom: 1px solid rgba(255, 255, 255, 0.3);
}
.dock-item {
    width: 40px;
    flex: none;
    position: relative;
    padding-bottom: 14px;
}
.di {
    display: block;
    width: 100%;
}
.dock-item.running::after {
    content: "";
    position: absolute;
    left: 50%;
    bottom: 2px;
    width: 4px;
    height: 4px;
    margin-left: -2px;
    border-radius: 50%;
    background: #2a0a70;
}
.badge {
    position: absolute;
    top: -4px;
    right: -8px;
    width: 18px;
    height: 18px;
    border-radius: 50%;
    background: #ee1c25;
    color: #fff;
    font-size: 11px;
    line-height: 18px;
    text-align: center;
}
.item-mamp {
    width: 50px;
    margin: 0 -5px;
    padding-bottom: 9px;
}
.item-sublime {
    width: 60px;
    margin-left: 2px;
    padding-bottom: 16px;
}
.item-firefox {
    width: 86px;
    margin-left: 6px;
    padding-bottom: 19px;
}
.item-sequel {
    width: 102px;
    margin-left: 12px;
    padding-bottom: 21px;
}
.item-ps {
    width: 125px;
    margin-left: 1px;
    padding-bottom: 9px;
}
.item-vlc {
    width: 72px;
    margin-left: 22px;
    padding-bottom: 12px;
}
.item-wheel {
    width: 56px;
    margin-left: -1px;
    padding-bottom: 9px;
}
.item-zoom {
    width: 41px;
    margin-left: -5px;
    padding-bottom: 14px;
}
.item-zip {
    width: 46px;
    margin-left: -1px;
    padding-bottom: 11px;
}
.dock-sep {
    width: 1px;
    height: 46px;
    margin-bottom: 9px;
    background: rgba(30, 10, 60, 0.5);
}
.sep-a {
    margin-left: 15px;
    margin-right: -1px;
}
.sep-b {
    margin-left: 4px;
}
.tooltip {
    position: absolute;
    left: 0;
    bottom: 151px;
    width: 101px;
    height: 28px;
    border: 1px solid #d8d4da;
    border-radius: 5px;
    background: #efedf1;
    color: #222;
    font-size: 14px;
    line-height: 26px;
    letter-spacing: 0.2px;
    text-align: center;
    font-family: Roboto, "Liberation Sans", sans-serif;
}
.tooltip::after {
    content: "";
    position: absolute;
    left: 50%;
    bottom: -9px;
    margin-left: -9px;
    border: 9px solid transparent;
    border-bottom: 0;
    border-top-color: #efedf1;
}
.ps {
    font: 700 41px "Open Sans", "Liberation Sans", sans-serif;
    fill: #fff;
}
.zoom {
    font: 700 11px "Liberation Sans", sans-serif;
    fill: #fff;
    text-anchor: middle;
}
.zip {
    font: 400 6px "Liberation Sans", sans-serif;
    fill: #888;
    text-anchor: middle;
}
```
